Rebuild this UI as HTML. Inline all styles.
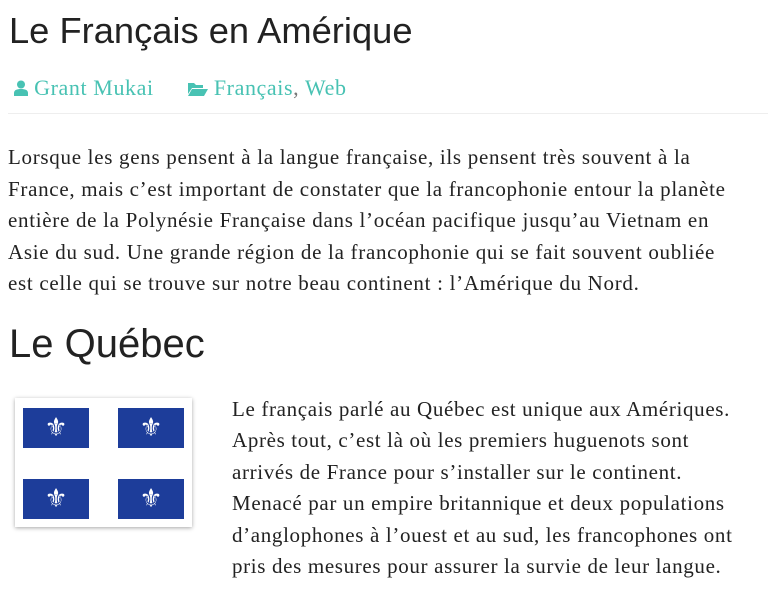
<!DOCTYPE html>
<html><head><meta charset="utf-8"><style>
body{margin:0;background:#fff;color:#222;width:768px;height:590px;overflow:hidden;position:relative;font-family:"Liberation Serif",serif}
h1{position:absolute;margin:0;font-family:"Liberation Sans",sans-serif;font-weight:normal;color:#222;white-space:nowrap}
.meta{position:absolute;top:75px;left:14px;font-size:22px;letter-spacing:0.6px;color:#48c2b3;white-space:nowrap}
.hr{position:absolute;left:8px;right:0;top:113px;border-top:1px solid #eee}
.p1{position:absolute;left:8px;top:142px;width:760px;font-size:21px;letter-spacing:0.7px;line-height:31.5px;white-space:nowrap}
.p2{position:absolute;left:232px;top:394px;font-size:21px;letter-spacing:0.65px;line-height:31.4px;white-space:nowrap}
.flag{position:absolute;left:15px;top:398px;width:177px;height:129px;background:#fff;box-shadow:0 1px 4px rgba(0,0,0,.35)}
.b{position:absolute;width:66px;height:40px;background:#1d3d9a;color:#fff;font-size:26px;text-align:center;line-height:40px;font-family:"DejaVu Sans",sans-serif}
</style></head><body>
<h1 style="left:9px;top:10px;font-size:36.3px">Le Français en Amérique</h1>
<div class="meta"><svg width="14" height="16" viewBox="0 0 14 16" style="vertical-align:-1px"><circle cx="7" cy="4.5" r="4" fill="#48c2b3"/><path d="M0 16v-3c0-3 3-4 7-4s7 1 7 4v3z" fill="#48c2b3"/></svg> Grant Mukai<span style="display:inline-block;width:34px"></span><svg width="20" height="15" viewBox="0 0 20 15" style="vertical-align:-1px"><path d="M0 2h6l2 2h7v3H4L0 13z" fill="#48c2b3"/><path d="M4 8h16l-4 7H0z" fill="#48c2b3"/></svg> Français<span style="color:#777">,</span> Web</div>
<div class="hr"></div>
<div class="p1">Lorsque les gens pensent à la langue française, ils pensent très souvent à la<br>France, mais c’est important de constater que la francophonie entour la planète<br>entière de la Polynésie Française dans l’océan pacifique jusqu’au Vietnam en<br>Asie du sud. Une grande région de la francophonie qui se fait souvent oubliée<br>est celle qui se trouve sur notre beau continent : l’Amérique du Nord.</div>
<h1 style="left:9px;top:322px;font-size:40px">Le Québec</h1>
<div class="flag">
<div class="b" style="left:8px;top:10px">⚜</div><div class="b" style="left:103px;top:10px">⚜</div>
<div class="b" style="left:8px;top:81px">⚜</div><div class="b" style="left:103px;top:81px">⚜</div>
</div>
<div class="p2">Le français parlé au Québec est unique aux Amériques.<br>Après tout, c’est là où les premiers huguenots sont<br>arrivés de France pour s’installer sur le continent.<br>Menacé par un empire britannique et deux populations<br>d’anglophones à l’ouest et au sud, les francophones ont<br>pris des mesures pour assurer la survie de leur langue.</div>
</body></html>
